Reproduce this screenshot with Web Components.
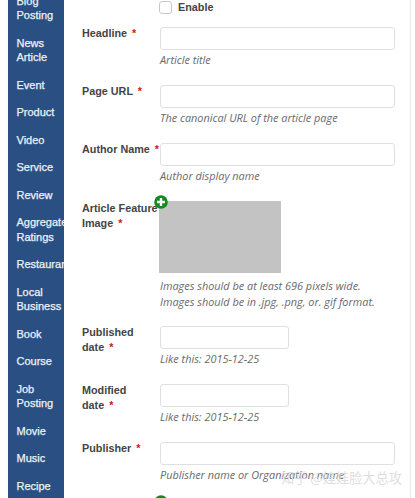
<!DOCTYPE html>
<html>
<head>
<meta charset="utf-8">
<title>Schema settings</title>
<style>
  html, body { margin: 0; height: 100%; overflow: hidden; background: #fff; }
  body { font-family: "Liberation Sans", sans-serif; }
</style>
</head>
<body>
<schema-page>
  <schema-sidebar slot="nav">
    <nav-item>Blog Posting</nav-item>
    <nav-item>News Article</nav-item>
    <nav-item>Event</nav-item>
    <nav-item>Product</nav-item>
    <nav-item>Video</nav-item>
    <nav-item>Service</nav-item>
    <nav-item>Review</nav-item>
    <nav-item>Aggregate Ratings</nav-item>
    <nav-item>Restaurant</nav-item>
    <nav-item>Local Business</nav-item>
    <nav-item>Book</nav-item>
    <nav-item>Course</nav-item>
    <nav-item>Job Posting</nav-item>
    <nav-item>Movie</nav-item>
    <nav-item>Music</nav-item>
    <nav-item>Recipe</nav-item>
  </schema-sidebar>

  <check-field>Enable</check-field>
  <form-field label="Headline" hint="Article title"></form-field>
  <form-field label="Page URL" hint="The canonical URL of the article page"></form-field>
  <form-field label="Author Name" hint="Author display name"></form-field>
  <image-field label="Article Feature" last="Image">
    Images should be at least 696 pixels wide.<br>Images should be in .jpg, .png, or. gif format.
  </image-field>
  <form-field label="Published" last="date" hint="Like this: 2015-12-25" size="short"></form-field>
  <form-field label="Modified" last="date" hint="Like this: 2015-12-25" size="short"></form-field>
  <form-field label="Publisher" hint="Publisher name or Organization name" gap="12"></form-field>
  <add-icon></add-icon>
</schema-page>
<water-mark>知乎 @娃娃脸大总攻</water-mark>

<script>
const plusIcon = `
  <svg width="14" height="14" viewBox="0 0 14 14">
    <circle cx="7" cy="7" r="6.8" fill="#128a1e"/>
    <path d="M7 3v8M3 7h8" stroke="#fff" stroke-width="2.4"/>
  </svg>`;

function define(name, css, html) {
  customElements.define(name, class extends HTMLElement {
    connectedCallback() {
      if (this.shadowRoot) return;
      this.attachShadow({ mode: 'open' });
      this.shadowRoot.innerHTML = `<style>${css}</style>` + html(this);
    }
  });
}

define('schema-page', `
  :host { display: flex; margin: -13px 0 0 8px; height: 560px; overflow: hidden; }
  .main { flex: 1; min-width: 0; border-right: 1px solid #e8e8e8; margin-right: 4px; padding: 13px 0 0 18px; }
`, () => `
  <slot name="nav"></slot>
  <div class="main"><slot></slot></div>
`);

define('schema-sidebar', `
  :host { display: block; width: 56px; flex: none; background: #2a5083; overflow: hidden; }
`, () => `<slot></slot>`);

define('nav-item', `
  :host { display: block; padding: 6.5px 0 6.5px 8.5px; width: 44px; color: #eef2f7;
    font: 400 11px/14.5px "Liberation Sans", sans-serif; -webkit-text-stroke: .25px #eef2f7; }
`, () => `<slot></slot>`);

define('check-field', `
  :host { display: flex; align-items: center; gap: 6px; padding-left: 77px; height: 14px; margin-bottom: 13px;
    font: 700 10.8px/14px "Liberation Sans", sans-serif; color: #444; }
  i { box-sizing: border-box; width: 13px; height: 13px; border: 1px solid #c8c8c8; border-radius: 3px; background: #fff; }
`, () => `<i></i><slot></slot>`);

const fieldCss = `
  :host { display: grid; grid-template-columns: 78px 1fr; }
  label { font: 700 10.8px/14.5px "Liberation Sans", sans-serif; color: #444; margin-top: -1px; }
  label b { color: #d01818; margin-left: 2px; }
  label span { white-space: nowrap; }
  .hint { font: italic 400 10.9px/16px "Open Sans", sans-serif; color: #6a6a6a; }
`;

function labelHtml(el) {
  const first = el.getAttribute('label');
  const last = el.getAttribute('last');
  if (last) return `${first} <span>${last} <b>*</b></span>`;
  return `<span>${first} <b>*</b></span>`;
}

define('form-field', fieldCss + `
  .box { box-sizing: border-box; height: 23px; width: 235px; border: 1px solid #e0e0e0; border-radius: 3px; background: #fff; margin-bottom: 2px; }
  .box.short { width: 129px; }
`, (el) => `
  <label>${labelHtml(el)}</label>
  <div class="col" style="padding-bottom:${el.getAttribute('gap') || 17}px">
    <div class="box ${el.getAttribute('size') || ''}"></div>
    <div class="hint">${el.getAttribute('hint')}</div>
  </div>
`);

define('image-field', fieldCss + `
  label { width: 86px; margin-top: 0; }
  .col { position: relative; padding-bottom: 17px; }
  .thumb { width: 122px; height: 72px; background: #c3c3c3; margin: 0 0 5px -1px; }
  .plus { position: absolute; left: -6px; top: -6px; line-height: 0; }
  .hint { line-height: 15.5px; }
`, (el) => `
  <label>${el.getAttribute('label')} <span>${el.getAttribute('last')} <b>*</b></span></label>
  <div class="col">
    <div class="thumb"></div>
    <span class="plus">${plusIcon}</span>
    <div class="hint"><slot></slot></div>
  </div>
`);

define('add-icon', `
  :host { display: block; padding-left: 72px; line-height: 0; }
`, () => plusIcon);

define('water-mark', `
  :host { position: absolute; left: 281px; top: 470px; color: rgba(218,218,218,.88);
    font: 400 13.2px/16px "Noto Sans CJK SC", sans-serif; white-space: nowrap; }
`, () => `<slot></slot>`);
</script>
</body>
</html>
